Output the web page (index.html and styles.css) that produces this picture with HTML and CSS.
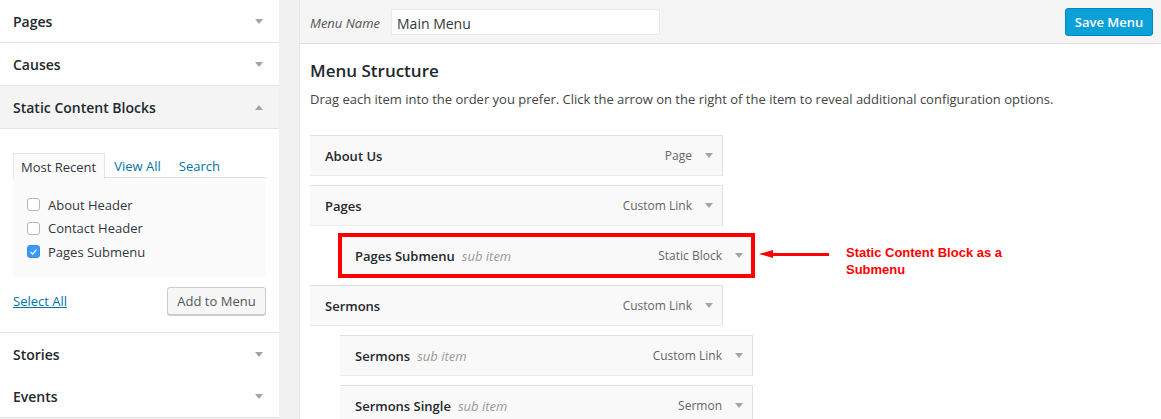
FILE: index.html
```html
<!DOCTYPE html>
<html lang="en">
<head>
<meta charset="utf-8">
<title>Menus</title>
<link rel="stylesheet" href="styles.css">
</head>
<body>
<div class="layout">
  <aside class="sidebar">
    <div class="acc-head"><span>Pages</span><i class="tri"></i></div>
    <div class="acc-head"><span>Causes</span><i class="tri"></i></div>
    <div class="acc-head open"><span>Static Content Blocks</span><i class="tri up"></i></div>
    <div class="acc-body">
      <div class="tabs">
        <span class="tab active">Most Recent</span>
        <a class="tab" href="#">View All</a>
        <a class="tab" href="#">Search</a>
      </div>
      <div class="tab-panel">
        <label class="check"><span class="box"></span>About Header</label>
        <label class="check"><span class="box"></span>Contact Header</label>
        <label class="check"><span class="box checked"><svg viewBox="0 0 14 14" width="14" height="14"><path d="M3.6 7.4 L6 9.8 L10.4 4.2" fill="none" stroke="#fff" stroke-width="1.5" stroke-linecap="round" stroke-linejoin="round"/></svg></span>Pages Submenu</label>
      </div>
      <div class="acc-foot">
        <a class="select-all" href="#">Select All</a>
        <button class="btn">Add to Menu</button>
      </div>
    </div>
    <div class="acc-head plain"><span>Stories</span><i class="tri"></i></div>
    <div class="acc-head"><span>Events</span><i class="tri"></i></div>
  </aside>

  <main class="panel">
    <div class="panel-head">
      <span class="name-label">Menu Name</span>
      <div class="name-input">Main Menu</div>
      <button class="btn-primary">Save Menu</button>
    </div>
    <div class="panel-body">
      <h3 class="title">Menu Structure</h3>
      <p class="desc">Drag each item into the order you prefer. Click the arrow on the right of the item to reveal additional configuration options.</p>
      <ul class="menu">
        <li class="item"><span class="item-title">About Us</span><span class="item-type">Page<i class="tri"></i></span></li>
        <li class="item"><span class="item-title">Pages</span><span class="item-type">Custom Link<i class="tri"></i></span></li>
        <li class="item sub highlight"><span class="item-title">Pages Submenu<em>sub item</em></span><span class="item-type">Static Block<i class="tri"></i></span>
          <div class="note"><span class="note-arrow"></span><span class="note-text">Static Content Block as a<br>Submenu</span></div>
        </li>
        <li class="item"><span class="item-title">Sermons</span><span class="item-type">Custom Link<i class="tri"></i></span></li>
        <li class="item sub"><span class="item-title">Sermons<em>sub item</em></span><span class="item-type">Custom Link<i class="tri"></i></span></li>
        <li class="item sub"><span class="item-title">Sermons Single<em>sub item</em></span><span class="item-type">Sermon<i class="tri"></i></span></li>
      </ul>
    </div>
  </main>
</div>
</body>
</html>
```

FILE: styles.css
```css
* { box-sizing: border-box; }
html, body { margin: 0; padding: 0; }
body {
  font-family: "Open Sans", "Noto Sans", sans-serif;
  background: #f1f1f1;
  color: #444;
  width: 1161px;
  height: 419px;
  overflow: hidden;
}
.layout { display: flex; align-items: flex-start; }

/* sidebar */
.sidebar {
  width: 279px;
  margin-right: 20px;
  background: #fff;
  flex: none;
}
.acc-head {
  height: 43px;
  border-bottom: 1px solid #e5e5e5;
  padding: 0 16px 0 13px;
  display: flex;
  align-items: center;
  justify-content: space-between;
  font-size: 14px;
  font-weight: 600;
  color: #23282d;
}
.acc-head.open { background: #f4f4f4; }
.acc-head.plain { border-bottom: none; height: 42px; }
.tri {
  display: inline-block;
  width: 0; height: 0;
  border-left: 4px solid transparent;
  border-right: 4px solid transparent;
  border-top: 5px solid #a0a5aa;
}
.tri.up { border-top: none; border-bottom: 5px solid #a0a5aa; }

.acc-body {
  padding: 24px 13px 0 13px;
  border-bottom: 1px solid #e5e5e5;
  height: 204px;
}
.tabs {
  display: flex;
  height: 25px;
  border-bottom: 1px solid #ddd;
  font-size: 13px;
}
.tab {
  display: flex;
  align-items: center;
  padding: 0 8px;
  color: #0073aa;
  text-decoration: none;
  border: 1px solid transparent;
  border-bottom: none;
}
.tab.active {
  color: #32373c;
  border-color: #e5e5e5;
  background: #fbfbfb;
  margin-bottom: -1px;
  height: 26px;
  padding: 0 8px 0 7px;
}
.tab-panel {
  background: #fbfbfb;
  padding: 15px 0 12px 14px;
  height: 99px;
}
.check {
  display: flex;
  align-items: center;
  height: 23.5px;
  font-size: 13px;
  color: #32373c;
}
.box {
  width: 13px; height: 13px;
  border: 1px solid #b4b9be;
  border-radius: 3px;
  background: #fff;
  margin-right: 8px;
  display: inline-flex;
  align-items: center;
  justify-content: center;
}
.box.checked { background: #3b99fc; border-color: #3b8ee6; }
.box svg { width: 12px; height: 12px; }
.acc-foot {
  display: flex;
  justify-content: space-between;
  align-items: center;
  margin-top: 10px;
}
.select-all { color: #0073aa; font-size: 13px; text-decoration: underline; }
.btn {
  font-family: inherit;
  font-size: 13px;
  color: #555;
  background: #f7f7f7;
  border: 1px solid #cccccc;
  border-radius: 3px;
  box-shadow: 0 1px 0 #ccc;
  height: 28px;
  width: 99px;
  padding: 0;
}

/* main panel */
.panel {
  flex: 1;
  background: #fff;
  border-left: 1px solid #e5e5e5;
  height: 419px;
}
.panel-head {
  height: 44px;
  background: #f5f5f5;
  border-bottom: 1px solid #dfdfdf;
  display: flex;
  align-items: center;
  padding: 0 8px 0 10px;
}
.name-label {
  font-style: italic;
  font-size: 13px;
  color: #555;
  margin-right: 11px;
  padding-top: 3px;
}
.name-input {
  width: 269px;
  height: 26px;
  background: #fff;
  border: 1px solid #eaeaea;
  font-size: 14px;
  color: #32373c;
  padding: 3px 0 0 5px;
  display: flex;
  align-items: center;
}
.btn-primary {
  margin-left: auto;
  font-family: inherit;
  font-size: 13px;
  font-weight: 600;
  color: #fff;
  background: #0aa0d8;
  border: 1px solid #0087be;
  border-radius: 3px;
  height: 28px;
  width: 88px;
  padding: 0;
}
.panel-body { padding: 0 10px; }
.title {
  margin: 15px 0 0;
  font-size: 17px;
  font-weight: 600;
  color: #23282d;
  line-height: 24px;
}
.desc {
  margin: 6px 0 0;
  font-size: 13px;
  line-height: 20px;
  color: #444;
}
.menu { list-style: none; margin: 26px 0 0; padding: 0; }
.item {
  position: relative;
  width: 413px;
  height: 41px;
  margin-bottom: 9px;
  background: #f9f9f9;
  border-top: 1px solid #e1e1e1;
  border-right: 1px solid #e1e1e1;
  border-bottom: 1px solid #ececec;
  display: flex;
  align-items: center;
  justify-content: space-between;
  padding: 0 9px 0 15px;
}
.item.sub { margin-left: 30px; }
.item-title { font-size: 13px; font-weight: 600; color: #23282d; }
.item-title em {
  font-weight: 400;
  color: #999;
  margin-left: 7px;
}
.item-type { font-size: 12px; color: #666; display: flex; align-items: center; }
.item-type .tri { margin-left: 13px; }
.item.highlight {
  outline: 4px solid #ff0000;
  outline-offset: -2px;
}
.note {
  position: absolute;
  left: 419px;
  top: 8px;
  display: flex;
  align-items: flex-start;
}
.note-arrow {
  position: relative;
  width: 70px;
  height: 9px;
  margin-top: 6px;
}
.note-arrow::before {
  content: "";
  position: absolute;
  left: 0; top: 0;
  border-top: 4.5px solid transparent;
  border-bottom: 4.5px solid transparent;
  border-right: 14px solid #ff0000;
}
.note-arrow::after {
  content: "";
  position: absolute;
  left: 13px; top: 3px;
  width: 57px;
  height: 3px;
  background: #ff0000;
}
.note-text {
  margin-left: 17px;
  font-family: "Liberation Sans", Arial, sans-serif;
  font-weight: 700;
  font-size: 13px;
  line-height: 17px;
  color: #ff0000;
  white-space: nowrap;
}
```
